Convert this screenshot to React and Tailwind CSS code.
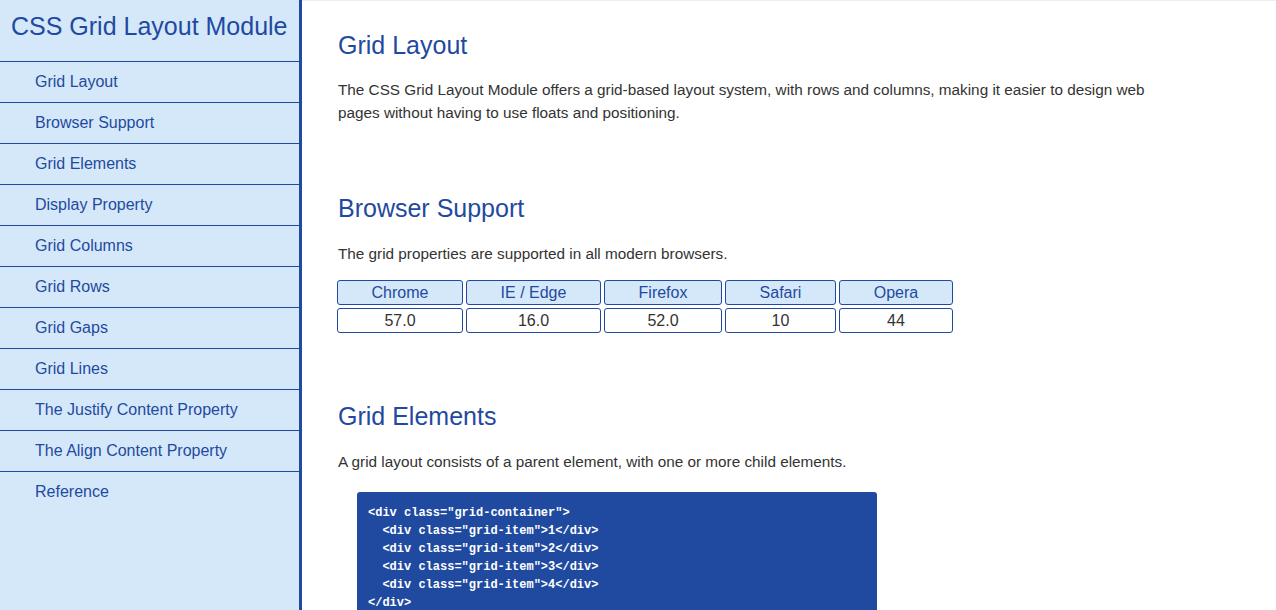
const navItems = [
  "Grid Layout",
  "Browser Support",
  "Grid Elements",
  "Display Property",
  "Grid Columns",
  "Grid Rows",
  "Grid Gaps",
  "Grid Lines",
  "The Justify Content Property",
  "The Align Content Property",
  "Reference",
];

const browsers = [
  { name: "Chrome", version: "57.0", w: "w-[126px]" },
  { name: "IE / Edge", version: "16.0", w: "w-[135px]" },
  { name: "Firefox", version: "52.0", w: "w-[118px]" },
  { name: "Safari", version: "10", w: "w-[111px]" },
  { name: "Opera", version: "44", w: "w-[114px]" },
];

const code = `<div class="grid-container">
  <div class="grid-item">1</div>
  <div class="grid-item">2</div>
  <div class="grid-item">3</div>
  <div class="grid-item">4</div>
</div>`;

function Sidebar() {
  return (
    <aside className="h-screen w-[302px] shrink-0 border-r-[3px] border-[#1f4aa0] bg-[#d5e8f9]">
      <div className="box-content h-[49px] border-b border-[#1f4aa0] pl-[11px] pt-[12px] text-[25px] leading-[28px] text-[#1f4aa0]">
        CSS Grid Layout Module
      </div>
      {navItems.map((item, i) => (
        <div
          key={item}
          className={
            "flex h-[41px] items-center pl-[35px] text-[16px] text-[#1f4aa0] " +
            (i < navItems.length - 1 ? "border-b border-[#1f4aa0]" : "pb-[2px]")
          }
        >
          {item}
        </div>
      ))}
    </aside>
  );
}

export default function App() {
  return (
    <div className="flex h-screen overflow-hidden bg-white font-['Liberation_Sans',Arial,sans-serif]">
      <Sidebar />
      <main className="flex-1 border-t border-[#eeeeee] pl-[36px] pt-[30px] text-[#333333]">
        <h2 className="text-[25px] leading-[28px] text-[#1f4aa0]">Grid Layout</h2>
        <p className="mt-[19px] max-w-[840px] text-[15.3px] leading-[23px]">
          The CSS Grid Layout Module offers a grid-based layout system, with rows and columns, making it easier to design web
          pages without having to use floats and positioning.
        </p>

        <h2 className="mt-[70px] text-[25px] leading-[28px] text-[#1f4aa0]">Browser Support</h2>
        <p className="mt-[20px] text-[15.3px] leading-[23px]">The grid properties are supported in all modern browsers.</p>
        <div className="-ml-px mt-[15px] flex flex-col gap-[3px]">
          <div className="flex gap-[3px]">
            {browsers.map((b) => (
              <div
                key={b.name}
                className={b.w + " flex h-[25px] items-center justify-center rounded-[3px] border border-[#1f4aa0] bg-[#d5e8f9] text-[16px] text-[#1f4aa0]"}
              >
                {b.name}
              </div>
            ))}
          </div>
          <div className="flex gap-[3px]">
            {browsers.map((b) => (
              <div
                key={b.name}
                className={b.w + " flex h-[25px] items-center justify-center rounded-[3px] border border-[#1f4aa0] text-[16px] text-[#333333]"}
              >
                {b.version}
              </div>
            ))}
          </div>
        </div>

        <h2 className="mt-[69px] text-[25px] leading-[28px] text-[#1f4aa0]">Grid Elements</h2>
        <p className="mt-[20px] text-[15.3px] leading-[23px]">A grid layout consists of a parent element, with one or more child elements.</p>
        <pre className="ml-[19px] mt-[19px] w-[520px] rounded-t-[3px] bg-[#1f4aa0] px-[11px] pb-[10px] pt-[12px] font-['Liberation_Mono','Courier_New',monospace] text-[12px] font-bold leading-[18px] text-white">
          {code}
        </pre>
      </main>
    </div>
  );
}
